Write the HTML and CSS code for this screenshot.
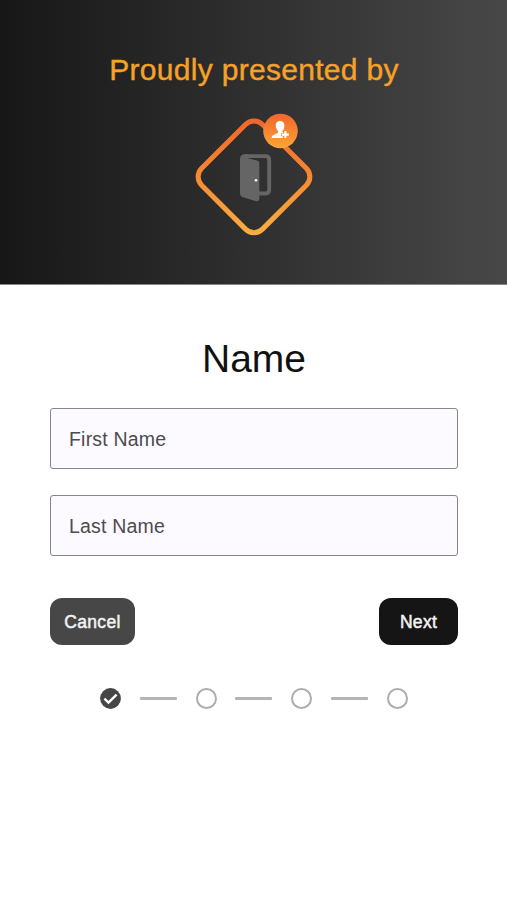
FILE: index.html
```html
<!DOCTYPE html>
<html lang="en">
  <head>
    <meta charset="UTF-8" />
    <meta name="viewport" content="width=device-width, initial-scale=1.0" />
    <title>Name</title>
    <link rel="stylesheet" href="styles.css">
  </head>
  <body>
    <div class="banner">
      <p class="banner-title">Proudly presented by</p>
      <svg class="logo" width="120" height="124" viewBox="194 112 120 124">
        <defs>
          <linearGradient id="frame" x1="0" y1="0" x2="1" y2="1">
            <stop offset="0.05" stop-color="#f1672b" />
            <stop offset="0.5" stop-color="#f68a32" />
            <stop offset="1" stop-color="#fbb040" />
          </linearGradient>
          <linearGradient id="badge" x1="0" y1="0" x2="0" y2="1">
            <stop offset="0" stop-color="#f1652a" />
            <stop offset="1" stop-color="#faa637" />
          </linearGradient>
        </defs>
        <!-- frame -->
        <rect x="211" y="133.8" width="86" height="86" rx="12" transform="rotate(45 254 176.8)" fill="none" stroke="url(#frame)" stroke-width="5" />
        <!-- door -->
        <path d="M244 156.1H265.5Q269.2 156.1 269.2 159.8V189.8Q269.2 193.5 265.5 193.5H258" fill="none" stroke="#656565" stroke-width="3.8" />
        <path d="M240 159Q240 154.2 245 154.2H248V158.2L257 160.4Q259.3 161 259.3 163.2V198.5Q259.3 202 255.5 201L243 197.2Q240 196.3 240 193.5Z" fill="#656565" />
        <circle cx="256" cy="180.2" r="1.3" fill="#fff" />
        <!-- badge -->
        <circle cx="280.5" cy="131" r="17.3" fill="url(#badge)" />
        <path d="M280 121C276.8 121 275.6 123.3 275.8 126C276 128.5 277 130 278.2 131.2V132.6C277 134.3 271.8 134.2 271.6 138H282.8V136.2H281.2V133H283L282.3 131.2C283.4 130 284.3 128.3 284.4 126C284.6 123.3 283.2 121 280 121Z" fill="#fff" />
        <path d="M285.4 131.1V138.1M281.9 134.6H288.9" stroke="#fff" stroke-width="2.2" />
      </svg>
    </div>

    <form class="form">
      <h1 class="form-title">Name</h1>
      <input class="field" type="text" placeholder="First Name" />
      <input class="field" type="text" placeholder="Last Name" />

      <div class="buttons">
        <button class="btn cancel" type="button">Cancel</button>
        <button class="btn next" type="button">Next</button>
      </div>

      <div class="steps">
        <svg class="step" viewBox="0 0 21 21">
          <circle cx="10.5" cy="10.5" r="10.4" fill="#464646" />
          <path d="M4.4 10.7L8.5 14.6L16.6 6.6" fill="none" stroke="#fff" stroke-width="2.3" />
        </svg>
        <span class="line"></span>
        <span class="step circle"></span>
        <span class="line"></span>
        <span class="step circle"></span>
        <span class="line"></span>
        <span class="step circle"></span>
      </div>
    </form>
  </body>
</html>
```
FILE: styles.css
```css
body,
h1,
p {
  margin: 0;
  padding: 0;
}

body {
  background-color: #fff;
  font-family: "Liberation Sans", Arial, sans-serif;
}

.banner {
  display: flex;
  flex-direction: column;
  align-items: center;
  box-sizing: border-box;
  height: 285px;
  padding-top: 52px;
  border-bottom: 1px solid #858585;
  background: linear-gradient(to right, #171717, #484848) border-box;
}

.banner-title {
  height: 36px;
  padding-left: 1px;
  line-height: 35px;
  font-size: 30px;
  letter-spacing: 0.3px;
  color: #f7a128;
  -webkit-text-stroke: 0.4px #f7a128;
}

.logo {
  margin-top: 24px;
}

.form {
  display: flex;
  flex-direction: column;
  padding: 50px 49px 0 50px;
}

.form-title {
  height: 48px;
  line-height: 48px;
  margin-bottom: 25px;
  text-align: center;
  font-size: 39px;
  font-weight: normal;
  color: #111;
}

.field {
  box-sizing: border-box;
  height: 61px;
  margin-bottom: 26px;
  padding: 2px 18px 0;
  border: 1px solid #868588;
  border-radius: 3px;
  background-color: #fcfaff;
  font-family: inherit;
  font-size: 19.5px;
  letter-spacing: 0.2px;
}

.field::placeholder {
  color: #4c4b4e;
}

.buttons {
  display: flex;
  justify-content: space-between;
  margin-top: 16px;
}

.btn {
  height: 47px;
  padding: 2px 0 0;
  border: none;
  border-radius: 12px;
  font-family: inherit;
  font-size: 17.5px;
  letter-spacing: 0.3px;
  color: #f2f2f2;
  -webkit-text-stroke: 0.5px #f2f2f2;
}

.cancel {
  width: 85px;
  background-color: #474747;
}

.next {
  width: 79px;
  background-color: #151515;
}

.steps {
  display: flex;
  justify-content: space-between;
  align-items: center;
  margin: 43px 50px 0;
}

.step {
  box-sizing: border-box;
  width: 21px;
  height: 21px;
}

.circle {
  border: 2px solid #adadad;
  border-radius: 50%;
}

.line {
  width: 37px;
  height: 3px;
  border-radius: 1px;
  background-color: #b4b4b4;
}
```
